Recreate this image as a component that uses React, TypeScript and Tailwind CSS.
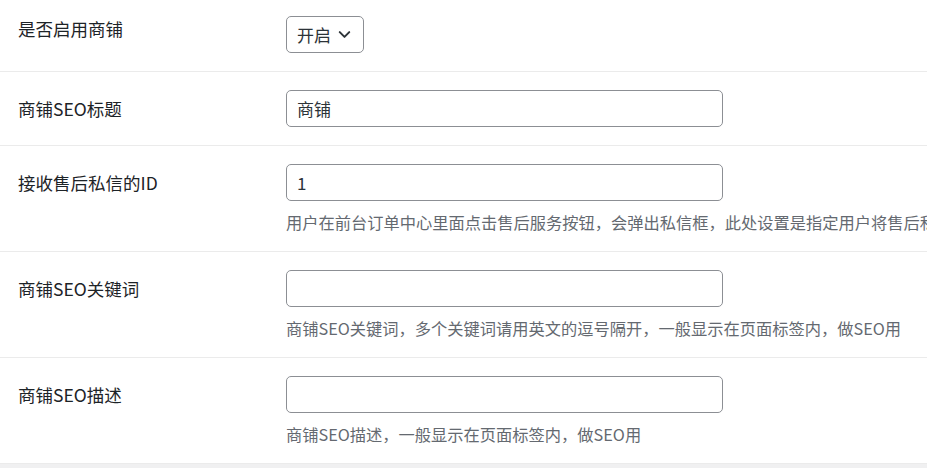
import { ChevronDown } from 'lucide-react'

const font = { fontFamily: '"Noto Sans CJK SC", "Noto Sans", sans-serif' }

interface RowProps {
    label: string
    children: React.ReactNode
    description?: string
}

function Row({ label, children, description }: RowProps) {
    return (
        <div className="flex border-b border-[#ebebeb] pt-[18px] pb-[18px]">
            <div className="w-[286px] shrink-0 pl-[18px] text-[17.5px] leading-[37px] text-[#1d2327]">
                {label}
            </div>
            <div className="min-w-0 flex-1 overflow-hidden">
                {children}
                {description && (
                    <p className="mt-[10px] whitespace-nowrap text-[16.25px] leading-[22px] text-[#646970]">
                        {description}
                    </p>
                )}
            </div>
        </div>
    )
}

function TextInput({ value }: { value?: string }) {
    return (
        <input
            type="text"
            defaultValue={value}
            className="h-[37px] w-[437px] rounded-[5px] border border-[#8c8f94] bg-white px-[10px] text-[17px] text-[#2c3338] outline-none"
            style={font}
        />
    )
}

export default function App() {
    return (
        <div className="h-[468px] w-[927px] overflow-hidden bg-white" style={font}>
            <div className="h-[464px] overflow-hidden">
                <div className="flex border-b border-[#ebebeb] pt-[16px] pb-[18px]">
                    <div className="w-[286px] shrink-0 pt-px pl-[18px] text-[17.5px] leading-[24px] text-[#1d2327]">
                        是否启用商铺
                    </div>
                    <div className="flex h-[37px] w-[78px] items-center rounded-[5px] border border-[#8c8f94] pl-[10px] text-[17px] text-[#2c3338]">
                        <span>开启</span>
                        <ChevronDown className="ml-[4px] h-[19px] w-[19px] text-[#2c3338]" strokeWidth={2.5} />
                    </div>
                </div>
                <Row label="商铺SEO标题">
                    <TextInput value="商铺" />
                </Row>
                <Row
                    label="接收售后私信的ID"
                    description="用户在前台订单中心里面点击售后服务按钮，会弹出私信框，此处设置是指定用户将售后私信"
                >
                    <TextInput value="1" />
                </Row>
                <Row
                    label="商铺SEO关键词"
                    description="商铺SEO关键词，多个关键词请用英文的逗号隔开，一般显示在页面标签内，做SEO用"
                >
                    <TextInput />
                </Row>
                <Row label="商铺SEO描述" description="商铺SEO描述，一般显示在页面标签内，做SEO用">
                    <TextInput />
                </Row>
            </div>
            <div className="h-[4px] bg-[#f0f0f1]" />
        </div>
    )
}
